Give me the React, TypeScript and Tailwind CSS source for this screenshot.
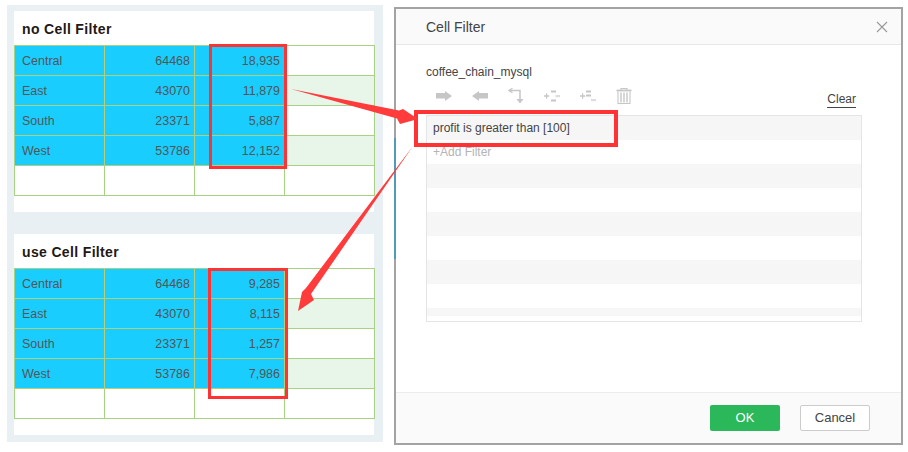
const rows = [
  { name: "Central", a: "64468" },
  { name: "East", a: "43070" },
  { name: "South", a: "23371" },
  { name: "West", a: "53786" },
];

function DataTable({ values }: { values: string[] }) {
  const blue = "h-[30px] pt-[2px] flex items-center bg-[#19cdff] border-r border-b border-[#b4cf78] text-[12.5px] text-[#555555]";
  return (
    <div className="grid grid-cols-[repeat(4,90px)] w-[361px] border-l border-t border-[#a8d283]">
      {rows.map((r, i) => (
        <div key={r.name} className="contents">
          <div className={`${blue} pl-[7px]`}>{r.name}</div>
          <div className={`${blue} justify-end pr-1`}>{r.a}</div>
          <div className={`${blue} justify-end pr-1`}>{values[i]}</div>
          <div className={`h-[30px] border-r border-b border-[#a8d283] ${i % 2 === 1 ? "bg-[#e8f5e9]" : "bg-white"}`}></div>
        </div>
      ))}
      <div className="h-[30px] border-r border-b border-[#a8d283] bg-white"></div>
      <div className="h-[30px] border-r border-b border-[#a8d283] bg-white"></div>
      <div className="h-[30px] border-r border-b border-[#a8d283] bg-white"></div>
      <div className="h-[30px] border-r border-b border-[#a8d283] bg-white"></div>
    </div>
  );
}

function Card({ title, values }: { title: string; values: string[] }) {
  return (
    <div className="w-[360px] h-[201px] bg-white">
      <div className="h-[34px] pl-2 pt-[2px] flex items-center text-[14px] font-bold tracking-[0.35px] text-[#231815]">{title}</div>
      <DataTable values={values} />
    </div>
  );
}

function ToolIcons() {
  return (
    <div className="flex gap-5 pl-[10px] text-[#c6c6c6]">
      <svg className="w-4 h-4" viewBox="0 0 16 16" fill="currentColor">
        <path d="M0 5h9V3l7 5-7 5v-2.500H0z" />
      </svg>
      <svg className="w-4 h-4" viewBox="0 0 16 16" fill="currentColor">
        <path d="M16 5H7V3L0 8l7 5v-2.500h9z" />
      </svg>
      <svg className="w-4 h-4" viewBox="0 0 16 16" fill="none" stroke="currentColor" strokeWidth="1.500">
        <path d="M2 2.500h10v9" />
        <path d="M4.500 0.300L1 2.500l3.500 2.200" strokeWidth="1.300" />
        <path d="M8.500 11h7L12 15.500z" fill="currentColor" stroke="none" />
      </svg>
      <svg className="w-4 h-4" viewBox="0 0 16 16" fill="currentColor">
        <path d="M0 7.300h2V5.300h1.200v2h2v1.400h-2v2H2v-2H0z" />
        <path d="M7 2.500h5V4.500H7zM7 11.500h5v2H7z" />
        <path d="M11.500 7h4.500v2.200h-4.500z" opacity="0.6" />
      </svg>
      <svg className="w-4 h-4" viewBox="0 0 16 16" fill="currentColor">
        <path d="M0 7.300h2V5.300h1.200v2h2v1.400h-2v2H2v-2H0z" />
        <path d="M6 2.500h5V4.500H6zM6 6.500h5v2H6z" />
        <path d="M11 11h5v2.200h-5z" opacity="0.6" />
      </svg>
      <svg className="w-4 h-4" viewBox="0 0 16 16" fill="none" stroke="currentColor" strokeWidth="1.100">
        <path d="M0.500 2.500h15" strokeWidth="1.800" />
        <path d="M5 2V0.500h6V2" />
        <path d="M2 3.500v12h12v-12" />
        <path d="M5 4.500v10M8 4.500v10M11 4.500v10" strokeWidth="1.400" />
      </svg>
    </div>
  );
}

function FilterBox() {
  const stripes = ["a", "b", "c", "d", "e", "f", "g", "h"];
  return (
    <div className="w-[436px] h-[207px] border border-[#e5e5e5] bg-white overflow-hidden">
      {stripes.map((s, i) => (
        <div key={s} className={`h-6 pl-[6px] flex items-center text-[12px] ${i % 2 === 0 ? "bg-[#f6f6f6]" : "bg-white"}`}>
          {i === 0 && <span className="text-[#444444]">profit is greater than [100]</span>}
          {i === 1 && <span className="text-[#b4b4b4]">+Add Filter</span>}
        </div>
      ))}
      <div className="h-2 bg-[#f6f6f6]"></div>
    </div>
  );
}

function Dialog() {
  return (
    <div className="relative mt-[7px] ml-[11px] w-[509px] h-[438px] border-2 border-[#a3a3a3] bg-white flex flex-col">
      <div className="h-[36px] shrink-0 pl-[30px] pr-[13px] flex items-center justify-between bg-[#fafafa] border-b border-[#e8e8e8]">
        <span className="mt-[2px] text-[14px] text-[#444444]">Cell Filter</span>
        <svg className="w-3 h-3 text-[#999999]" viewBox="0 0 12 12" fill="none" stroke="currentColor" strokeWidth="1.100">
          <path d="M1 1l10 10M11 1L1 11" />
        </svg>
      </div>
      <div className="flex-1 pl-[30px] pt-5">
        <div className="h-[14px] flex items-center text-[12px] text-[#444444]">coffee_chain_mysql</div>
        <div className="w-[436px] h-[16px] mt-[9px] flex items-center justify-between">
          <ToolIcons />
          <span className="mt-[8px] mr-[6px] text-[12px] leading-[15px] text-[#444444] border-b border-[#444444]">Clear</span>
        </div>
        <div className="mt-[11px]">
          <FilterBox />
        </div>
      </div>
      <div className="h-[51px] shrink-0 pr-[31px] flex items-center justify-end gap-5 bg-[#fafafa] border-t border-[#ececec]">
        <button className="w-[70px] h-[26px] rounded-[2px] bg-[#2bb85a] text-[13px] text-white">OK</button>
        <button className="w-[70px] h-[26px] rounded-[2px] bg-white border border-[#cccccc] text-[13px] text-[#444444]">Cancel</button>
      </div>
      {/* page behind the dialog shows through the left edge */}
      <div className="absolute -left-[2px] top-[129px] w-[2px] h-[121px] bg-[#4f9db5]"></div>
    </div>
  );
}

export default function App() {
  return (
    <div className="relative w-[908px] h-[452px] flex bg-white overflow-hidden font-['Liberation_Sans',Arial,sans-serif]">
      <div className="mt-[5px] ml-[7px] w-[376px] h-[437px] pl-[7px] pt-[6px] bg-[#e9f0f4] flex flex-col gap-[22px] shrink-0">
        <Card title="no Cell Filter" values={["18,935", "11,879", "5,887", "12,152"]} />
        <Card title="use Cell Filter" values={["9,285", "8,115", "1,257", "7,986"]} />
      </div>
      <Dialog />

      {/* callouts drawn on top of the screenshot */}
      <div className="absolute left-[209px] top-[44px] w-[78px] h-[125px] border-[3px] border-[#ff3333]"></div>
      <div className="absolute left-[208px] top-[268px] w-[80px] h-[131px] border-[3px] border-[#ff3333]"></div>
      <div className="absolute left-[414px] top-[110px] w-[204px] h-[37px] border-4 border-[#ff3333]"></div>
      <svg className="absolute left-0 top-0 w-[908px] h-[452px] pointer-events-none" viewBox="0 0 908 452">
        <path d="M291 89L399 110.500L403 109L418 119L400 124L397 118.500Z" fill="#ff3b3b" />
        <path d="M413 146L311 294L314 300L298 311L302 292L306 288Z" fill="#ff3b3b" />
      </svg>
    </div>
  );
}
